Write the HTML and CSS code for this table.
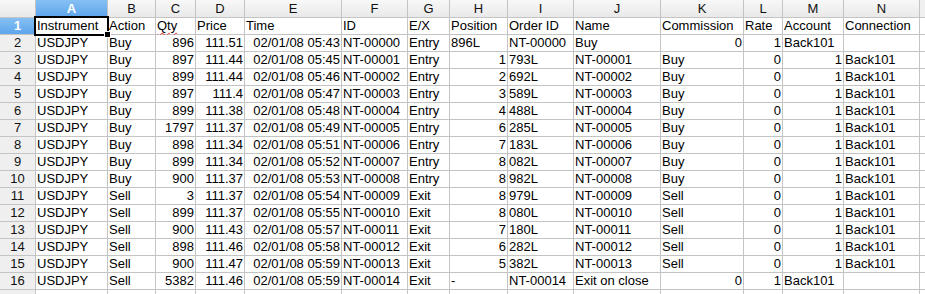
FILE: index.html
```html
<!DOCTYPE html>
<html>
<head>
<meta charset="utf-8">
<link rel="stylesheet" href="styles.css">
</head>
<body>
<div class="sheet">
  <div class="corner"></div>
  <div class="ch sel">A</div><div class="ch">B</div><div class="ch">C</div><div class="ch">D</div><div class="ch">E</div><div class="ch">F</div><div class="ch">G</div><div class="ch">H</div><div class="ch">I</div><div class="ch">J</div><div class="ch">K</div><div class="ch">L</div><div class="ch">M</div><div class="ch">N</div><div class="ch fill"></div>

  <div class="rh sel">1</div><div class="c active">Instrument</div><div class="c">Action</div><div class="c"><span class="spell">Qty</span></div><div class="c">Price</div><div class="c">Time</div><div class="c">ID</div><div class="c">E/X</div><div class="c">Position</div><div class="c">Order ID</div><div class="c">Name</div><div class="c">Commission</div><div class="c">Rate</div><div class="c">Account</div><div class="c">Connection</div><div class="c"></div>

  <div class="rh">2</div><div class="c">USDJPY</div><div class="c">Buy</div><div class="c r">896</div><div class="c r">111.51</div><div class="c r">02/01/08 05:43</div><div class="c">NT-00000</div><div class="c">Entry</div><div class="c">896L</div><div class="c">NT-00000</div><div class="c">Buy</div><div class="c r">0</div><div class="c r">1</div><div class="c">Back101</div><div class="c"></div><div class="c"></div>

  <div class="rh">3</div><div class="c">USDJPY</div><div class="c">Buy</div><div class="c r">897</div><div class="c r">111.44</div><div class="c r">02/01/08 05:45</div><div class="c">NT-00001</div><div class="c">Entry</div><div class="c r">1</div><div class="c">793L</div><div class="c">NT-00001</div><div class="c">Buy</div><div class="c r">0</div><div class="c r">1</div><div class="c">Back101</div><div class="c"></div>

  <div class="rh">4</div><div class="c">USDJPY</div><div class="c">Buy</div><div class="c r">899</div><div class="c r">111.44</div><div class="c r">02/01/08 05:46</div><div class="c">NT-00002</div><div class="c">Entry</div><div class="c r">2</div><div class="c">692L</div><div class="c">NT-00002</div><div class="c">Buy</div><div class="c r">0</div><div class="c r">1</div><div class="c">Back101</div><div class="c"></div>

  <div class="rh">5</div><div class="c">USDJPY</div><div class="c">Buy</div><div class="c r">897</div><div class="c r">111.4</div><div class="c r">02/01/08 05:47</div><div class="c">NT-00003</div><div class="c">Entry</div><div class="c r">3</div><div class="c">589L</div><div class="c">NT-00003</div><div class="c">Buy</div><div class="c r">0</div><div class="c r">1</div><div class="c">Back101</div><div class="c"></div>

  <div class="rh">6</div><div class="c">USDJPY</div><div class="c">Buy</div><div class="c r">899</div><div class="c r">111.38</div><div class="c r">02/01/08 05:48</div><div class="c">NT-00004</div><div class="c">Entry</div><div class="c r">4</div><div class="c">488L</div><div class="c">NT-00004</div><div class="c">Buy</div><div class="c r">0</div><div class="c r">1</div><div class="c">Back101</div><div class="c"></div>

  <div class="rh">7</div><div class="c">USDJPY</div><div class="c">Buy</div><div class="c r">1797</div><div class="c r">111.37</div><div class="c r">02/01/08 05:49</div><div class="c">NT-00005</div><div class="c">Entry</div><div class="c r">6</div><div class="c">285L</div><div class="c">NT-00005</div><div class="c">Buy</div><div class="c r">0</div><div class="c r">1</div><div class="c">Back101</div><div class="c"></div>

  <div class="rh">8</div><div class="c">USDJPY</div><div class="c">Buy</div><div class="c r">898</div><div class="c r">111.34</div><div class="c r">02/01/08 05:51</div><div class="c">NT-00006</div><div class="c">Entry</div><div class="c r">7</div><div class="c">183L</div><div class="c">NT-00006</div><div class="c">Buy</div><div class="c r">0</div><div class="c r">1</div><div class="c">Back101</div><div class="c"></div>

  <div class="rh">9</div><div class="c">USDJPY</div><div class="c">Buy</div><div class="c r">899</div><div class="c r">111.34</div><div class="c r">02/01/08 05:52</div><div class="c">NT-00007</div><div class="c">Entry</div><div class="c r">8</div><div class="c">082L</div><div class="c">NT-00007</div><div class="c">Buy</div><div class="c r">0</div><div class="c r">1</div><div class="c">Back101</div><div class="c"></div>

  <div class="rh">10</div><div class="c">USDJPY</div><div class="c">Buy</div><div class="c r">900</div><div class="c r">111.37</div><div class="c r">02/01/08 05:53</div><div class="c">NT-00008</div><div class="c">Entry</div><div class="c r">8</div><div class="c">982L</div><div class="c">NT-00008</div><div class="c">Buy</div><div class="c r">0</div><div class="c r">1</div><div class="c">Back101</div><div class="c"></div>

  <div class="rh">11</div><div class="c">USDJPY</div><div class="c">Sell</div><div class="c r">3</div><div class="c r">111.37</div><div class="c r">02/01/08 05:54</div><div class="c">NT-00009</div><div class="c">Exit</div><div class="c r">8</div><div class="c">979L</div><div class="c">NT-00009</div><div class="c">Sell</div><div class="c r">0</div><div class="c r">1</div><div class="c">Back101</div><div class="c"></div>

  <div class="rh">12</div><div class="c">USDJPY</div><div class="c">Sell</div><div class="c r">899</div><div class="c r">111.37</div><div class="c r">02/01/08 05:55</div><div class="c">NT-00010</div><div class="c">Exit</div><div class="c r">8</div><div class="c">080L</div><div class="c">NT-00010</div><div class="c">Sell</div><div class="c r">0</div><div class="c r">1</div><div class="c">Back101</div><div class="c"></div>

  <div class="rh">13</div><div class="c">USDJPY</div><div class="c">Sell</div><div class="c r">900</div><div class="c r">111.43</div><div class="c r">02/01/08 05:57</div><div class="c">NT-00011</div><div class="c">Exit</div><div class="c r">7</div><div class="c">180L</div><div class="c">NT-00011</div><div class="c">Sell</div><div class="c r">0</div><div class="c r">1</div><div class="c">Back101</div><div class="c"></div>

  <div class="rh">14</div><div class="c">USDJPY</div><div class="c">Sell</div><div class="c r">898</div><div class="c r">111.46</div><div class="c r">02/01/08 05:58</div><div class="c">NT-00012</div><div class="c">Exit</div><div class="c r">6</div><div class="c">282L</div><div class="c">NT-00012</div><div class="c">Sell</div><div class="c r">0</div><div class="c r">1</div><div class="c">Back101</div><div class="c"></div>

  <div class="rh">15</div><div class="c">USDJPY</div><div class="c">Sell</div><div class="c r">900</div><div class="c r">111.47</div><div class="c r">02/01/08 05:59</div><div class="c">NT-00013</div><div class="c">Exit</div><div class="c r">5</div><div class="c">382L</div><div class="c">NT-00013</div><div class="c">Sell</div><div class="c r">0</div><div class="c r">1</div><div class="c">Back101</div><div class="c"></div>

  <div class="rh">16</div><div class="c">USDJPY</div><div class="c">Sell</div><div class="c r">5382</div><div class="c r">111.46</div><div class="c r">02/01/08 05:59</div><div class="c">NT-00014</div><div class="c">Exit</div><div class="c">-</div><div class="c">NT-00014</div><div class="c">Exit on close</div><div class="c r">0</div><div class="c r">1</div><div class="c">Back101</div><div class="c"></div><div class="c"></div>

  <div class="rh"></div><div class="c"></div><div class="c"></div><div class="c"></div><div class="c"></div><div class="c"></div><div class="c"></div><div class="c"></div><div class="c"></div><div class="c"></div><div class="c"></div><div class="c"></div><div class="c"></div><div class="c"></div><div class="c"></div><div class="c"></div>
</div>
</body>
</html>
```

FILE: styles.css
```css
html, body {
  margin: 0;
  padding: 0;
  background: #ffffff;
  overflow: hidden;
}

.sheet {
  display: grid;
  grid-template-columns: 35px 71px 47px 39px 48px 96px 65px 41px 57px 65px 86px 82px 38px 60px 75px 1fr;
  grid-template-rows: 17px repeat(16, 16px) 4px;
  gap: 1px;
  background: #c4c4c4;
  width: 925px;
  height: 294px;
  overflow: hidden;
  font-family: "Liberation Sans", Arial, sans-serif;
  font-size: 13px;
  color: #000;
}

.corner,
.ch,
.rh {
  background: linear-gradient(#f8f8f8, #e9e9e9);
  color: #111;
  display: flex;
  align-items: center;
  justify-content: center;
  font-size: 13px;
  line-height: 16px;
}

.rh {
  background: #efefef;
}

.ch.sel,
.rh.sel {
  background: linear-gradient(#86c0f4, #5ea5ec);
  color: #fff;
  font-weight: bold;
}

.ch.fill {
  background: #f0f0f0;
}

.c {
  background: #fff;
  line-height: 16px;
  padding: 0 2px 0 1px;
  white-space: nowrap;
  overflow: visible;
  position: relative;
}

.c.r {
  text-align: right;
  padding: 0 1px 0 1px;
}

.active {
  outline: 2px solid #000;
  outline-offset: 0;
  z-index: 2;
}

.active::after {
  content: "";
  position: absolute;
  right: -4px;
  bottom: -4px;
  width: 5px;
  height: 5px;
  background: #000;
  border: 1px solid #fff;
}

.spell {
  text-decoration: underline wavy #e03030;
  text-decoration-thickness: 1px;
  text-underline-offset: 2px;
}
```
